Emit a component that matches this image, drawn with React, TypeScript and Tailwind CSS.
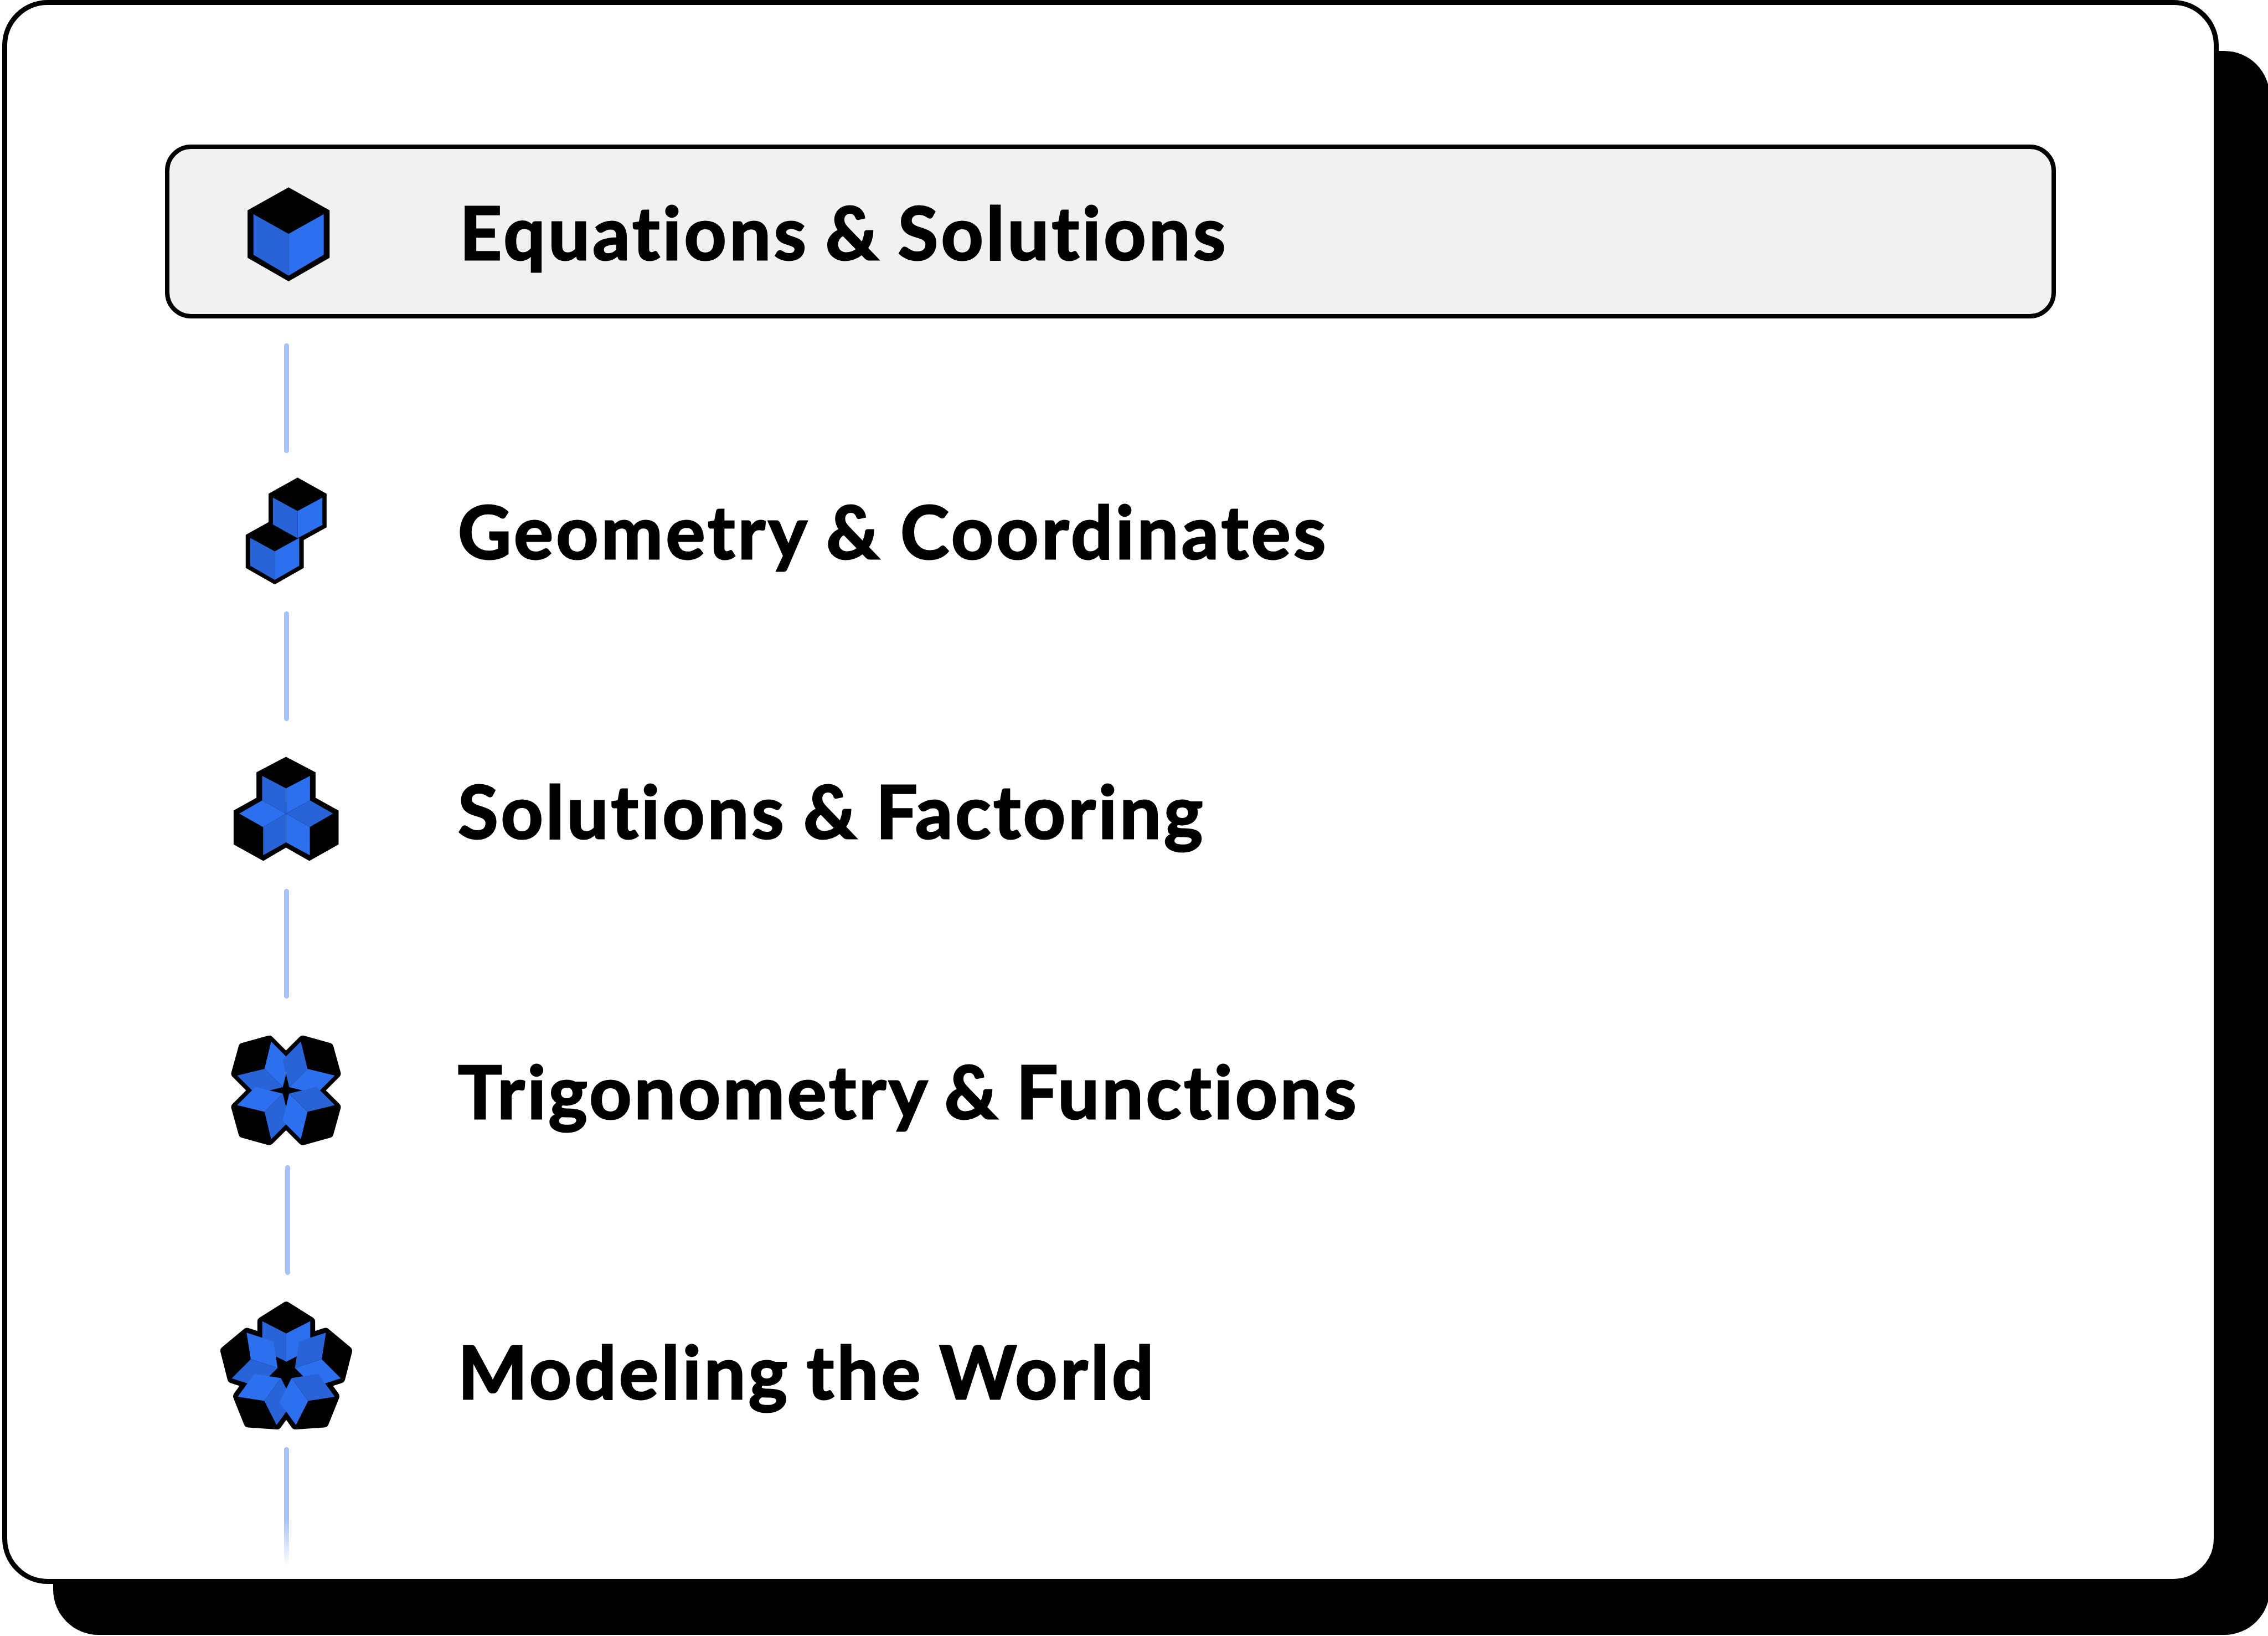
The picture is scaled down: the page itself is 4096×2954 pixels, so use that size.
import type { ReactNode } from "react";

const DARK = "#2864d8";
const LIGHT = "#2c70f0";

/** A cube seen corner-on, pointing away from the origin of the rosette. */
function PetalBody({ angle, top, side, tip, stroke }: { angle: number; top: number; side: number; tip: number; stroke: number }) {
  return (
    <polygon
      transform={`rotate(${angle})`}
      points={`0,${-top} ${side},${-tip} ${side},-122 0,-50 ${-side},-122 ${-side},${-tip}`}
      fill="black"
      stroke="black"
      strokeWidth={stroke}
      strokeLinejoin="round"
    />
  );
}

function PetalFaces({ angle, apex, tip, inner }: { angle: number; apex: number; tip: number; inner: number }) {
  const low = tip - apex + inner;
  return (
    <g transform={`rotate(${angle})`}>
      <polygon points={`0,${-apex} -143,${-tip} -143,${-low} 0,${-inner}`} fill={DARK} />
      <polygon points={`0,${-apex} 143,${-tip} 143,${-low} 0,${-inner}`} fill={LIGHT} />
    </g>
  );
}

function OneCube() {
  return (
    <svg viewBox="0 0 660 660" className="h-[200px] w-[200px]">
      <g transform="translate(3 3)">
        <polygon points="337.5,64 582,201 582,484 337.5,624 93,484 93,201" />
        <polygon points="128,224 337.5,341 337.5,590 128,466" fill={DARK} />
        <polygon points="547,224 337.5,341 337.5,590 547,466" fill={LIGHT} />
      </g>
    </svg>
  );
}

function TwoCubes() {
  return (
    <svg viewBox="0 0 660 750" className="h-[227.5px] w-[200px]">
      <g transform="translate(2 5)">
        <polygon points="392,48 565,145 565,345 392,441 219,345 219,145" />
        <polygon points="256,293 429,390 429,587 256,685 83,587 83,390" />
        <polygon points="245,168 392,248 392,410 245,328" fill={DARK} />
        <polygon points="540,168 392,248 392,410 540,330" fill={LIGHT} />
        <polygon points="110,408 256,488 256,658 110,574" fill={DARK} />
        <polygon points="402,408 256,488 256,658 402,574" fill={LIGHT} />
      </g>
    </svg>
  );
}

function ThreeCubes() {
  return (
    <svg viewBox="0 0 780 750" className="h-[227.5px] w-[236.7px]">
      <g transform="translate(2 2)">
        <polygon points="382,62 558,155 558,306 695,382 695,584 521,682 382,603 247,682 70,584 70,382 206,306 206,155" />
        <polygon points="382,400 240,322 240,176 382,250" fill={DARK} />
        <polygon points="382,400 525,322 525,176 382,250" fill={LIGHT} />
        <polygon points="382,400 525,322 662,400 524,480" fill={DARK} />
        <polygon points="382,400 524,480 524,648 382,572" fill={LIGHT} />
        <polygon points="382,400 246,481 246,648 382,572" fill={DARK} />
        <polygon points="382,400 246,481 104,400 240,322" fill={LIGHT} />
      </g>
    </svg>
  );
}

function FourCubes() {
  const angles = [-45, 45, -135, 135];
  return (
    <svg viewBox="0 0 780 780" className="h-[236.7px] w-[236.7px]">
      <g transform="translate(384 398)">
        {angles.map((a) => <PetalBody key={a} angle={a} top={362} side={141} tip={282} stroke={54} />)}
        <circle r="60" />
        {angles.map((a) => <PetalFaces key={a} angle={a} apex={181} tip={268} inner={27} />)}
      </g>
    </svg>
  );
}

function FiveCubes() {
  const angles = [0, -72, 72, -144, 144];
  return (
    <svg viewBox="0 0 900 900" className="h-[273px] w-[273px]">
      <g transform="translate(445 475)">
        {angles.map((a) => <PetalBody key={a} angle={a} top={382} side={143} tip={292} stroke={58} />)}
        <circle r="60" />
        {angles.map((a) => <PetalFaces key={a} angle={a} apex={222} tip={295} inner={54} />)}
      </g>
    </svg>
  );
}

function IconSlot({ children }: { children: ReactNode }) {
  return <div className="flex w-[274px] shrink-0 justify-center">{children}</div>;
}

function Connector({ className }: { className: string }) {
  return <div className={`ml-[513px] w-[9px] shrink-0 rounded-full ${className}`} />;
}

function Row({ icon, label, className, labelClass }: { icon: ReactNode; label: string; className: string; labelClass: string }) {
  return (
    <div className={`flex h-[314px] shrink-0 items-center pl-[381px] ${className}`}>
      <IconSlot>{icon}</IconSlot>
      <span className={`ml-[172px] whitespace-nowrap ${labelClass}`}>{label}</span>
    </div>
  );
}

export default function App() {
  return (
    <div className="h-[2954px] w-[4096px] overflow-hidden bg-white font-['Lato',sans-serif] text-[133px] leading-[160px] font-bold text-black [-webkit-text-stroke:3px_black] [font-variant-ligatures:none]">
      <div className="ml-[4px] flex h-[2860px] w-[4003px] flex-col rounded-[82px] border-[9px] border-black bg-white shadow-[92px_92px_0_0_#000]">
        <div className="-ml-[13px] flex flex-col pt-[252px]">
          <Row
            icon={<OneCube />}
            label="Equations & Solutions"
            className="ml-[298px] w-[3415px] rounded-[47px] border-8 border-black bg-[#f1f1f1] !pl-[75px]"
            labelClass="pl-[3px] tracking-[5.2px] [word-spacing:-8px]"
          />
          <Connector className="mt-[45px] h-[198px] bg-[#a5c2fa]" />
          <Row icon={<TwoCubes />} label="Geometry & Coordinates" className="-mt-[15px]" labelClass="pb-[5px] tracking-[5.2px] [word-spacing:-5px]" />
          <Connector className="-mt-[13px] h-[198px] bg-[#a5c2fa]" />
          <Row icon={<ThreeCubes />} label="Solutions & Factoring" className="mt-[2px]" labelClass="pt-[4px] tracking-[4.8px] [word-spacing:-7px]" />
          <Connector className="-mt-[13px] h-[198px] bg-[#a5c2fa]" />
          <Row icon={<FourCubes />} label="Trigonometry & Functions" className="mt-[6px]" labelClass="pt-[6px] tracking-[4.6px] [word-spacing:-8px]" />
          <Connector className="-mt-[19px] ml-[515px] h-[198px] bg-[#a5c2fa]" />
          <Row icon={<FiveCubes />} label="Modeling the World" className="mt-[8px]" labelClass="pt-[15px] tracking-[5.2px] [word-spacing:-8px]" />
          <Connector className="-mt-[11px] h-[215px] rounded-b-none bg-linear-to-b from-[#a5c2fa] from-60% to-transparent" />
        </div>
      </div>
    </div>
  );
}
